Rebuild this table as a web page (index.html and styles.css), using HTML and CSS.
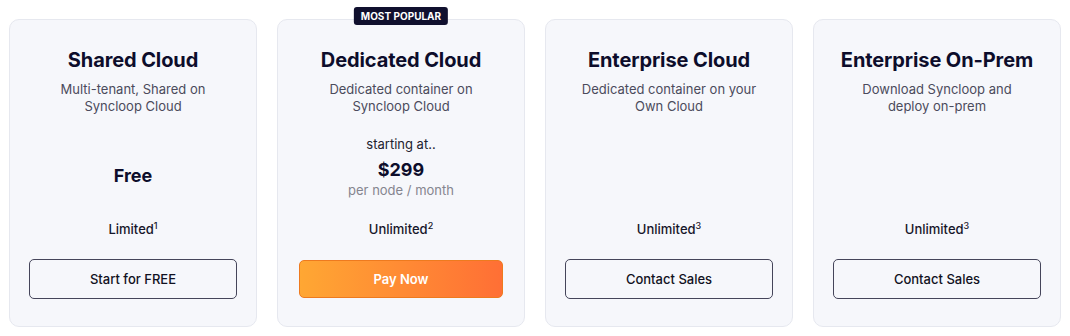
FILE: index.html
```html
<!DOCTYPE html>
<html lang="en">
<head>
  <meta charset="UTF-8" />
  <meta name="viewport" content="width=device-width, initial-scale=1.0"/>
  <title>Pricing</title>
  <link rel="stylesheet" href="styles.css">
</head>
<body>

<div class="plans">
  <div class="plan">
    <h2>Shared Cloud</h2>
    <p class="desc">Multi-tenant, Shared on<br>Syncloop Cloud</p>
    <div class="price price-free">
      <div class="amount-free">Free</div>
    </div>
    <div class="limit">Limited<sup>1</sup></div>
    <button class="button">Start for FREE</button>
  </div>

  <div class="plan">
    <span class="badge">MOST POPULAR</span>
    <h2>Dedicated Cloud</h2>
    <p class="desc">Dedicated container on<br>Syncloop Cloud</p>
    <div class="price">
      <div class="from">starting at..</div>
      <div class="amount">$299</div>
      <div class="unit">per node / month</div>
    </div>
    <div class="limit">Unlimited<sup>2</sup></div>
    <button class="button button-pay">Pay Now</button>
  </div>

  <div class="plan">
    <h2>Enterprise Cloud</h2>
    <p class="desc">Dedicated container on your<br>Own Cloud</p>
    <div class="price"></div>
    <div class="limit">Unlimited<sup>3</sup></div>
    <button class="button">Contact Sales</button>
  </div>

  <div class="plan">
    <h2>Enterprise On-Prem</h2>
    <p class="desc">Download Syncloop and<br>deploy on-prem</p>
    <div class="price"></div>
    <div class="limit">Unlimited<sup>3</sup></div>
    <button class="button">Contact Sales</button>
  </div>
</div>

</body>
</html>
```

FILE: styles.css
```css
body { margin: 0; font-family: Inter, "Noto Sans", sans-serif; background: #fff; color: #0d0d2b; }
.plans { display: grid; grid-template-columns: repeat(4, 248px); gap: 20px; padding: 19px 9px 0; }
.plan { position: relative; display: flex; flex-direction: column; align-items: center; height: 308px; box-sizing: border-box; padding: 26px 19px 26px; background: #f6f7fb; border: 1px solid #e6e8ef; border-radius: 10px; text-align: center; }
.badge { position: absolute; top: -13px; left: 50%; transform: translateX(-50%); background: #10102e; color: #fff; font-size: 10px; font-weight: 700; line-height: 18px; padding: 0 7px; border-radius: 3px; white-space: nowrap; }
h2 { margin: 0; font-size: 20px; font-weight: 650; line-height: 28px; letter-spacing: -0.1px; color: #0d0d2b; }
.desc { margin: 7px 0 0; font-size: 13px; line-height: 17px; color: #4b4b5c; }
.price { height: 104px; box-sizing: border-box; padding-top: 20px; }
.price-free { padding-top: 48px; }
.amount-free { font-size: 18px; font-weight: 650; line-height: 26px; }
.from { font-size: 13px; line-height: 18px; color: #22222e; }
.amount { margin-top: 5px; font-size: 18px; font-weight: 700; line-height: 24px; color: #0d0d2b; }
.unit { font-size: 13px; line-height: 16px; color: #85858f; }
.limit { font-size: 13px; font-weight: 500; line-height: 20px; color: #16162a; }
.limit sup { font-size: 9px; line-height: 0; vertical-align: 5px; }
.button { width: 100%; height: 40px; margin-top: 20px; font-family: Inter, "Noto Sans", sans-serif; font-size: 13px; font-weight: 500; color: #111122; background: transparent; border: 1px solid #45455a; border-radius: 5px; cursor: pointer; }
.button-pay { width: 204px; height: 38px; margin-top: 21px; color: #fff; font-weight: 600; background: linear-gradient(90deg, #ffa733, #ff6f35); border-color: #ee7a1e; }
```
